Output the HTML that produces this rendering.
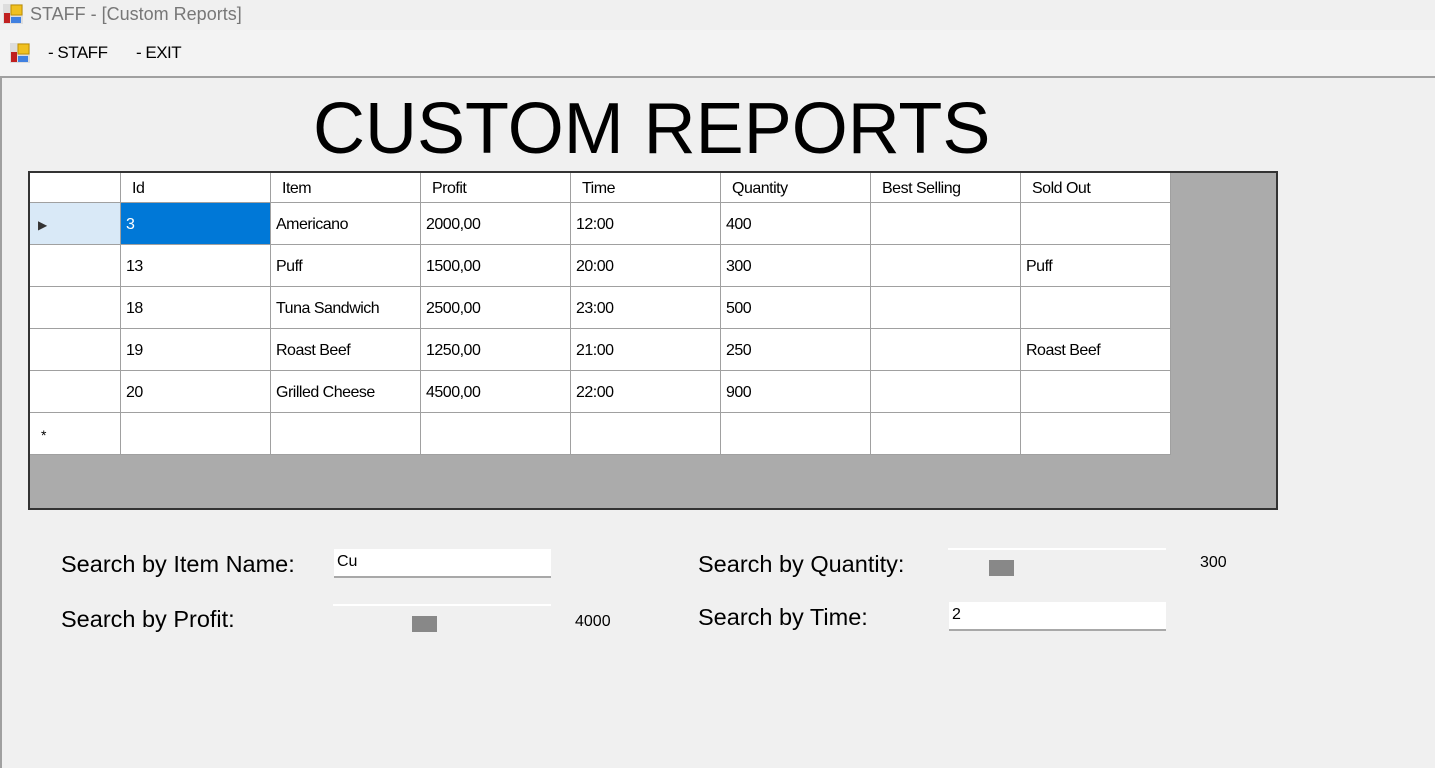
<!DOCTYPE html>
<html><head><style>
*{margin:0;padding:0;box-sizing:border-box}
body{width:1435px;height:768px;background:#f0f0f0;font-family:"Liberation Sans",Arial,sans-serif;position:relative;overflow:hidden}
.a{position:absolute}
.cell{position:absolute;background:#fff;border-right:1px solid #a0a0a0;border-bottom:1px solid #a0a0a0;font-size:16px;color:#000;padding-left:5px;padding-top:3px;display:flex;align-items:center;letter-spacing:-0.5px}
.lbl{position:absolute;font-size:23.5px;color:#000;letter-spacing:0px}
.tb{position:absolute;background:#fff;border-bottom:2px solid #a8a8a8;font-size:16px;padding:4px 3px}
</style></head><body>
<div class="a" style="left:0;top:0;width:1435px;height:30px;background:#f0f0f0"></div>
<svg class="a" style="left:3px;top:4px" width="20" height="20" viewBox="0 0 20 20"><rect x="0" y="0" width="20" height="20" fill="#ddd"/><rect x="8" y="1" width="11" height="10" fill="#f0c020" stroke="#c09000"/><rect x="1" y="9" width="6" height="10" fill="#c02020"/><rect x="8" y="13" width="10" height="6" fill="#4080e0"/></svg>
<div class="a" style="left:30px;top:4px;font-size:18px;color:#777">STAFF - [Custom Reports]</div>
<div class="a" style="left:0;top:30px;width:1435px;height:46px;background:#f3f3f3"></div>
<svg class="a" style="left:10px;top:43px" width="20" height="20" viewBox="0 0 20 20"><rect x="0" y="0" width="20" height="20" fill="#ddd"/><rect x="8" y="1" width="11" height="10" fill="#f0c020" stroke="#c09000"/><rect x="1" y="9" width="6" height="10" fill="#c02020"/><rect x="8" y="13" width="10" height="6" fill="#4080e0"/></svg>
<div class="a" style="left:48px;top:43px;font-size:17px;color:#000;letter-spacing:-0.5px">- STAFF</div>
<div class="a" style="left:136px;top:43px;font-size:17px;color:#000;letter-spacing:-0.5px">- EXIT</div>
<div class="a" style="left:0;top:76px;width:1435px;height:2px;background:#a0a0a0"></div>
<div class="a" style="left:0;top:76px;width:2px;height:692px;background:#a0a0a0"></div>
<div class="a" style="left:313px;top:89px;font-size:72px;color:#000;line-height:80px">CUSTOM REPORTS</div>
<div class="a" style="left:28px;top:171px;width:1250px;height:339px;background:#ababab;border:2px solid #333"></div>
<div id="g"></div>
<div class="lbl" style="left:61px;top:551px">Search by Item Name:</div>
<div class="lbl" style="left:61px;top:606px">Search by Profit:</div>
<div class="lbl" style="left:698px;top:551px">Search by Quantity:</div>
<div class="lbl" style="left:698px;top:604px">Search by Time:</div>
<div class="tb" style="left:334px;top:549px;width:217px;height:29px">Cu</div>
<div class="tb" style="left:949px;top:602px;width:217px;height:29px">2</div>
<div class="a" style="left:333px;top:604px;width:218px;height:2px;background:#fff"></div>
<div class="a" style="left:412px;top:616px;width:25px;height:16px;background:#888"></div>
<div class="a" style="left:575px;top:613px;font-size:16px">4000</div>
<div class="a" style="left:948px;top:548px;width:218px;height:2px;background:#fff"></div>
<div class="a" style="left:989px;top:560px;width:25px;height:16px;background:#888"></div>
<div class="a" style="left:1200px;top:554px;font-size:16px">300</div>
<script>
var cols=[30,121,271,421,571,721,871,1021,1171];
var rows=[173,203,245,287,329,371,413,455];
var data=[["Id","Item","Profit","Time","Quantity","Best Selling","Sold Out"],
["3","Americano","2000,00","12:00","400","",""],
["13","Puff","1500,00","20:00","300","","Puff"],
["18","Tuna Sandwich","2500,00","23:00","500","",""],
["19","Roast Beef","1250,00","21:00","250","","Roast Beef"],
["20","Grilled Cheese","4500,00","22:00","900","",""],
["","","","","","",""]];
var h="";
for(var r=0;r<7;r++){for(var c=0;c<8;c++){
var x=cols[c],y=rows[r],w=cols[c+1]-x,hh=rows[r+1]-y;
var txt=c==0?"":data[r][c-1];var st="";
if(c==0){st="border-right:1px solid #a0a0a0;";if(r==1){st+="background:#d9e9f7;";txt='<span style="font-size:12px;color:#333;margin-left:3px">&#9654;</span>'}if(r==6)txt='<span style="font-size:14px;margin-left:6px">*</span>';}
if(r==0&&c>0)st+="padding-left:11px;";
if(r==1&&c==1)st+="background:#0078d7;color:#fff;";
h+='<div class="cell" style="left:'+x+'px;top:'+y+'px;width:'+w+'px;height:'+hh+'px;'+st+'">'+txt+'</div>';}}
document.getElementById("g").innerHTML=h;
</script>
</body></html>
